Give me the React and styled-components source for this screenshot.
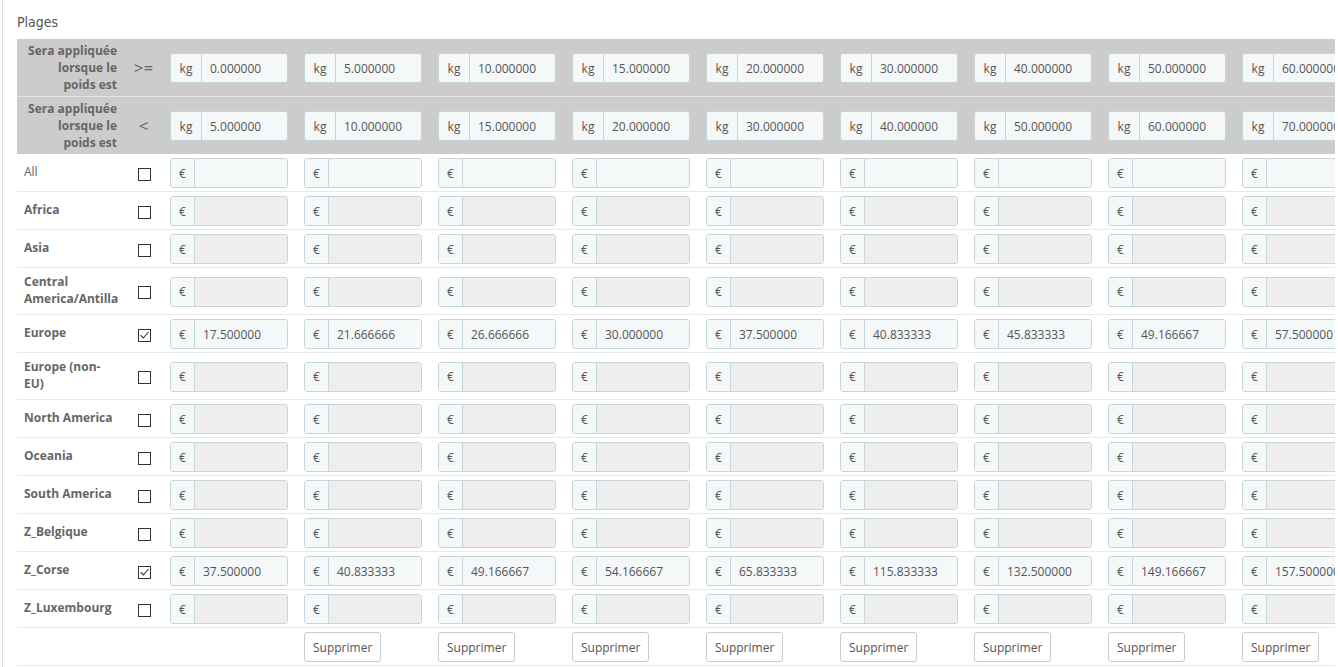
import React from 'react'
import styled, { createGlobalStyle } from 'styled-components'

const colors = {
    TEXT: '#555',
    LABEL: '#666',
    HEAD_BG: '#cccccc',
    LINE: '#eaeaea',
    FIELD_BORDER: '#c7d6db',
    FIELD_BG: '#f5f8f9',
    FIELD_OFF: '#eeeeee'
}

const GlobalStyle = createGlobalStyle`
    body {
        margin: 0;
        background: #fff;
        font-family: "Open Sans", "Liberation Sans", sans-serif;
        color: ${colors.TEXT};
        overflow: hidden;
    }
`

const Panel = styled.div`
    margin-left: 2px;
    border-left: 1px solid #dcdcdc;
    padding: 13px 3px 0 14px;
    height: 667px;
    box-sizing: border-box;
`

const Title = styled.div`
    font-family: "Liberation Sans Narrow", "DejaVu Sans Condensed", "Open Sans", sans-serif;
    font-size: 14px;
    line-height: 18px;
    color: #555;
    margin-bottom: 8px;
`

// the table is wider than the page, it scrolls sideways in the real admin
const Scroller = styled.div`
    overflow: hidden;
`

const Table = styled.table`
    border-collapse: collapse;
    table-layout: fixed;
    width: 1351px;
`

const HeadRow = styled.tr`
    background: ${colors.HEAD_BG};
    & + & td {
        border-top: 1px solid #e4e4e4;
    }
`

const HeadLabel = styled.td`
    text-align: right;
    font-weight: bold;
    font-size: 12px;
    line-height: 17px;
    color: #666;
    padding: 3px 8px 3px 0;
    vertical-align: middle;
`

const Operator = styled.td`
    text-align: center;
    font-size: 17px;
    color: #666;
    vertical-align: middle;
    padding-bottom: 2px;
`

const Row = styled.tr`
    border-bottom: 1px solid ${colors.LINE};
`

const ZoneLabel = styled.td`
    font-size: 12px;
    line-height: 17px;
    font-weight: ${p => (p.$plain ? 'normal' : 'bold')};
    color: ${colors.LABEL};
    padding: 5px 6px 7px 7px;
    vertical-align: middle;
`

const CheckCell = styled.td`
    text-align: center;
    vertical-align: middle;
`

const Box = styled.span`
    display: inline-block;
    width: 13px;
    height: 13px;
    box-sizing: border-box;
    border: 1px solid #333;
    background: #fff;
    position: relative;
    vertical-align: middle;
    margin-left: 1px;
    svg {
        position: absolute;
        left: 1px;
        top: 1px;
    }
`

const FieldCell = styled.td`
    padding: 4px 8px 3px;
    vertical-align: middle;
`

const Group = styled.div`
    display: flex;
    height: 30px;
    border: 1px solid ${colors.FIELD_BORDER};
    border-radius: 3px;
    overflow: hidden;
    box-sizing: border-box;
    font-size: 12px;
`

const Addon = styled.span`
    flex: none;
    width: ${p => p.$w}px;
    display: flex;
    align-items: center;
    justify-content: center;
    background: ${colors.FIELD_BG};
    border-right: 1px solid ${colors.FIELD_BORDER};
    color: #555;
`

const Value = styled.span`
    flex: 1;
    display: flex;
    align-items: center;
    padding-left: 8px;
    background: ${p => (p.$off ? colors.FIELD_OFF : colors.FIELD_BG)};
    color: #555;
    white-space: nowrap;
`

const Button = styled.button`
    font-family: "Open Sans", "Liberation Sans", sans-serif;
    font-size: 12px;
    color: #555;
    background: #fff;
    border: 1px solid #ccc;
    border-radius: 3px;
    height: 30px;
    padding: 0 8px;
    cursor: pointer;
`

const lower = ['0.000000', '5.000000', '10.000000', '15.000000', '20.000000', '30.000000', '40.000000', '50.000000', '60.000000']
const upper = ['5.000000', '10.000000', '15.000000', '20.000000', '30.000000', '40.000000', '50.000000', '60.000000', '70.000000']

const europe = ['17.500000', '21.666666', '26.666666', '30.000000', '37.500000', '40.833333', '45.833333', '49.166667', '57.500000']
const corse = ['37.500000', '40.833333', '49.166667', '54.166667', '65.833333', '115.833333', '132.500000', '149.166667', '157.500000']

const zones = [
    { name: 'All', plain: true, open: true },
    { name: 'Africa' },
    { name: 'Asia' },
    { name: 'Central America/Antilla' },
    { name: 'Europe', checked: true, prices: europe },
    { name: 'Europe (non-EU)' },
    { name: 'North America' },
    { name: 'Oceania' },
    { name: 'South America' },
    { name: 'Z_Belgique' },
    { name: 'Z_Corse', checked: true, prices: corse },
    { name: 'Z_Luxembourg' }
]

const Check = ({ checked }) => (
    <Box>
        {checked && (
            <svg width="9" height="9" viewBox="0 0 9 9">
                <path d="M0.5 4.2 L3.3 7 L8.5 1" fill="none" stroke="#333" strokeWidth="1.1" />
            </svg>
        )}
    </Box>
)

const Field = ({ unit, value, off }) => (
    <Group>
        <Addon $w={unit === 'kg' ? 30 : 23}>{unit}</Addon>
        <Value $off={off}>{value}</Value>
    </Group>
)

const HeadLines = () => (
    <HeadLabel>
        Sera appliquée
        <br />
        lorsque le
        <br />
        poids est
    </HeadLabel>
)

const App = () => (
    <Panel>
        <GlobalStyle />
        <Title>Plages</Title>
        <Scroller>
            <Table>
                <colgroup>
                    <col style={{ width: 108 }} />
                    <col style={{ width: 37 }} />
                    {lower.map((_, i) => (
                        <col key={i} style={{ width: 134 }} />
                    ))}
                </colgroup>
                <tbody>
                    <HeadRow>
                        <HeadLines />
                        <Operator>&gt;=</Operator>
                        {lower.map(v => (
                            <FieldCell key={v}>
                                <Field unit="kg" value={v} />
                            </FieldCell>
                        ))}
                    </HeadRow>
                    <HeadRow>
                        <HeadLines />
                        <Operator>&lt;</Operator>
                        {upper.map(v => (
                            <FieldCell key={v}>
                                <Field unit="kg" value={v} />
                            </FieldCell>
                        ))}
                    </HeadRow>
                    {zones.map(z => (
                        <Row key={z.name}>
                            <ZoneLabel $plain={z.plain}>{z.name}</ZoneLabel>
                            <CheckCell>
                                <Check checked={z.checked} />
                            </CheckCell>
                            {lower.map((_, i) => (
                                <FieldCell key={i}>
                                    <Field
                                        unit="€"
                                        value={z.prices ? z.prices[i] : ''}
                                        off={!z.prices && !z.open}
                                    />
                                </FieldCell>
                            ))}
                        </Row>
                    ))}
                    <Row>
                        <td />
                        <td />
                        <FieldCell />
                        {lower.slice(1).map((_, i) => (
                            <FieldCell key={i}>
                                <Button>Supprimer</Button>
                            </FieldCell>
                        ))}
                    </Row>
                </tbody>
            </Table>
        </Scroller>
    </Panel>
)

export default App
